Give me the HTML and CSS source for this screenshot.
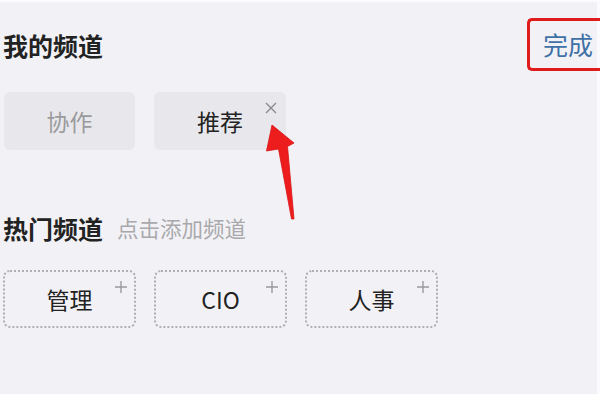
FILE: index.html
```html
<!DOCTYPE html>
<html lang="zh">
<head>
<meta charset="utf-8">
<title>频道管理</title>
<link rel="stylesheet" href="styles.css">
</head>
<body>
<div class="page">
  <div class="header">
    <div class="title">我的频道</div>
    <div class="done">完成</div>
  </div>
  <div class="my-row">
    <div class="chip chip-fixed">协作</div>
    <div class="chip">推荐
      <svg class="close" width="12" height="12" viewBox="0 0 12 12"><path d="M1 1 L11 11 M11 1 L1 11" stroke="#8a8a8e" stroke-width="1.4" fill="none"/></svg>
    </div>
  </div>
  <div class="hot-head">
    <div class="title">热门频道</div>
    <div class="sub">点击添加频道</div>
  </div>
  <div class="hot-row">
    <div class="dchip">管理
      <svg class="plus" width="12" height="12" viewBox="0 0 12 12"><path d="M6 0 V12 M0 6 H12" stroke="#9a9a9e" stroke-width="1.4" fill="none"/></svg>
    </div>
    <div class="dchip">CIO
      <svg class="plus" width="12" height="12" viewBox="0 0 12 12"><path d="M6 0 V12 M0 6 H12" stroke="#9a9a9e" stroke-width="1.4" fill="none"/></svg>
    </div>
    <div class="dchip">人事
      <svg class="plus" width="12" height="12" viewBox="0 0 12 12"><path d="M6 0 V12 M0 6 H12" stroke="#9a9a9e" stroke-width="1.4" fill="none"/></svg>
    </div>
  </div>
  <svg class="arrow" width="40" height="100" viewBox="262 122 40 100">
    <polygon points="272,125 294,143 287.5,146.5 294,219 291.5,219 278.5,149 266.5,151" fill="#ee1d1d" stroke="#d81414" stroke-width="0.8" stroke-linejoin="round"/>
  </svg>
</div>
</body>
</html>
```

FILE: styles.css
```css
html, body {
  margin: 0;
  padding: 0;
}
body {
  background: #f2f2f6;
  font-family: "Noto Sans CJK SC", "Noto Sans", sans-serif;
  color: #222;
  overflow: hidden;
}
.page {
  position: relative;
  width: 600px;
  height: 394px;
  box-sizing: border-box;
  border-top: 2px solid #fbfbfd;
  border-right: 3px solid #fbfbfd;
}
.header {
  display: flex;
  justify-content: space-between;
  align-items: center;
  margin-top: 16px;
  height: 53px;
  padding-left: 3px;
}
.title {
  font-size: 25px;
  font-weight: 700;
  line-height: 30px;
  color: #222;
}
.done {
  box-sizing: border-box;
  height: 53px;
  width: 74px;
  margin-right: -4px;
  border: 3px solid #e01b1b;
  border-right: none;
  border-radius: 5px 0 0 5px;
  padding-left: 13px;
  font-size: 25px;
  line-height: 47px;
  color: #3f70a6;
}
.my-row {
  display: flex;
  gap: 19px;
  margin-top: 21px;
  padding-left: 4px;
}
.chip {
  position: relative;
  width: 132px;
  height: 58px;
  border-radius: 6px;
  background: #e8e8ec;
  display: flex;
  align-items: center;
  justify-content: center;
  font-size: 23px;
  color: #222;
}
.chip-fixed {
  color: #9b9b9d;
  width: 131px;
}
.close {
  position: absolute;
  top: 10px;
  right: 9px;
}
.hot-head {
  display: flex;
  align-items: center;
  gap: 14px;
  margin-top: 63px;
  padding-left: 3px;
  height: 30px;
}
.sub {
  font-size: 21.5px;
  color: #a9a9ac;
  line-height: 30px;
}
.hot-row {
  display: flex;
  gap: 18px;
  margin-top: 27px;
  padding-left: 3px;
}
.dchip {
  position: relative;
  box-sizing: border-box;
  width: 133px;
  height: 58px;
  border: 2px dotted #adadb2;
  border-radius: 7px;
  display: flex;
  align-items: center;
  justify-content: center;
  font-size: 23px;
  color: #222;
}
.plus {
  position: absolute;
  top: 9px;
  right: 7px;
}
.arrow {
  position: absolute;
  left: 262px;
  top: 120px;
}
```
